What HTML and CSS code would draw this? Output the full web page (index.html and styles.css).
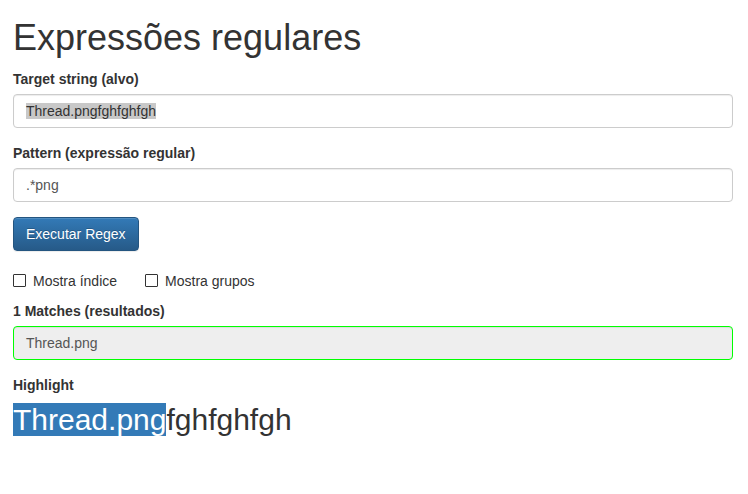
FILE: index.html
```html
<!DOCTYPE html>
<html lang="pt">
<head>
<meta charset="utf-8">
<title>Expressões regulares</title>
<link rel="stylesheet" href="styles.css">
</head>
<body>
<div class="page">
  <h1 class="title">Expressões regulares</h1>

  <div class="form-group">
    <div class="label">Target string (alvo)</div>
    <div class="form-control"><span class="sel">Thread.pngfghfghfgh</span></div>
  </div>

  <div class="form-group">
    <div class="label">Pattern (expressão regular)</div>
    <div class="form-control">.*png</div>
  </div>

  <div class="form-group">
    <button class="btn">Executar Regex</button>
  </div>

  <div class="checks">
    <label class="check"><span class="box"></span>Mostra índice</label>
    <label class="check"><span class="box"></span>Mostra grupos</label>
  </div>

  <div class="form-group">
    <div class="label">1 Matches (resultados)</div>
    <div class="form-control readonly match">Thread.png</div>
  </div>

  <div class="label">Highlight</div>
  <h2 class="highlight"><span class="hl">Thread.png</span>fghfghfgh</h2>
</div>
</body>
</html>
```

FILE: styles.css
```css
html, body {
  margin: 0;
  padding: 0;
  background: #fff;
}
body {
  font-family: "Liberation Sans", Arial, Helvetica, sans-serif;
  font-size: 14px;
  line-height: 20px;
  color: #333;
}
.page {
  padding: 0 15px 0 13px;
}
.title {
  font-size: 36px;
  font-weight: 500;
  line-height: 39.6px;
  margin: 18px 0 11px;
  color: #333;
}
.form-group {
  margin-bottom: 15px;
}
.label {
  font-weight: bold;
  margin-bottom: 5px;
  height: 20px;
}
.form-control {
  box-sizing: border-box;
  height: 34px;
  padding: 6px 12px;
  border: 1px solid #ccc;
  border-radius: 4px;
  box-shadow: inset 0 1px 1px rgba(0, 0, 0, .075);
  color: #555;
  background: #fff;
  white-space: nowrap;
}
.sel {
  background: #c8c8c8;
  color: #333;
}
.readonly {
  background: #eee;
}
.match {
  border-color: #00ff00;
}
.btn {
  display: inline-block;
  box-sizing: border-box;
  height: 34px;
  padding: 6px 12px;
  font-family: inherit;
  font-size: 14px;
  line-height: 20px;
  color: #fff;
  border: 1px solid #245580;
  border-radius: 4px;
  background: linear-gradient(to bottom, #337ab7 0%, #265a88 100%);
  box-shadow: inset 0 1px 0 rgba(255, 255, 255, .15), 0 1px 1px rgba(0, 0, 0, .075);
  text-shadow: 0 -1px 0 rgba(0, 0, 0, .2);
  cursor: pointer;
}
.checks {
  display: flex;
  gap: 28px;
  margin: 20px 0 10px;
  height: 20px;
}
.check {
  display: flex;
  align-items: center;
  gap: 7px;
}
.box {
  width: 13px;
  height: 13px;
  box-sizing: border-box;
  border: 1px solid #333;
  border-radius: 1px;
  background: #fff;
}
.highlight {
  font-size: 30px;
  font-weight: 500;
  line-height: 33px;
  margin: 8px 0 0;
  color: #333;
}
.hl {
  background: #337ab7;
  color: #fff;
}
```
